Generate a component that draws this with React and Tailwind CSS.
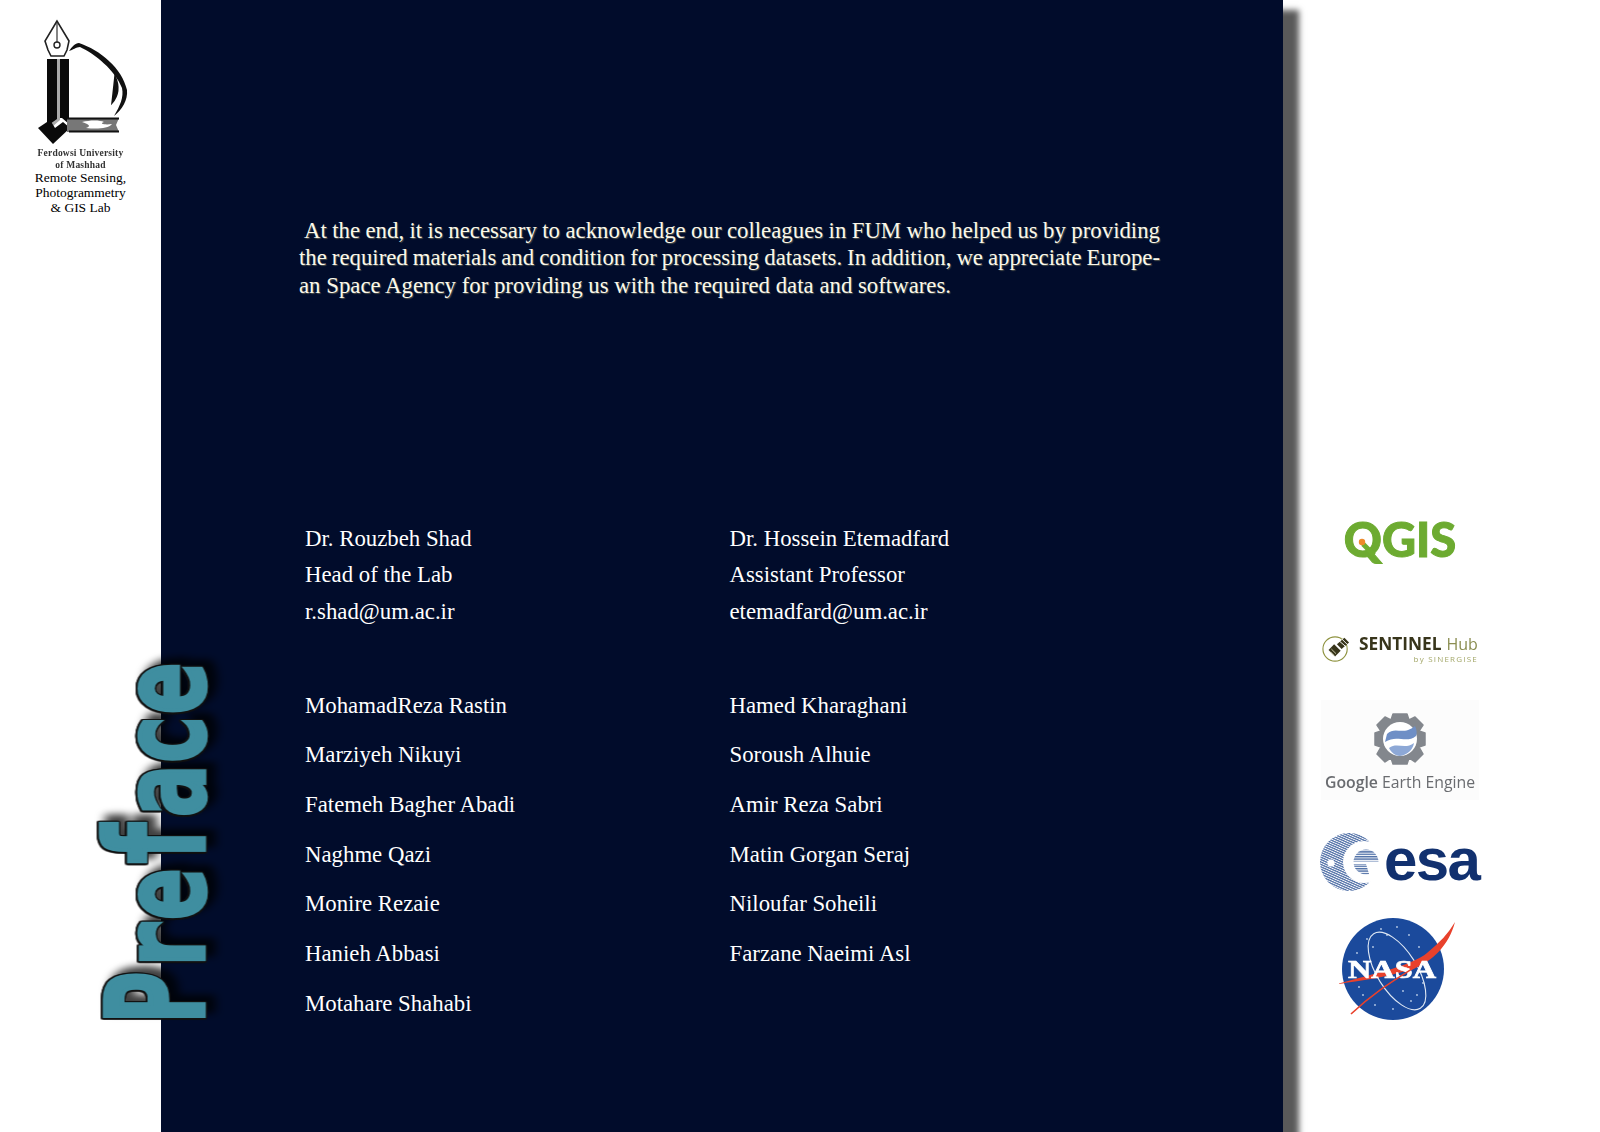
const serif = "font-['Liberation_Serif',serif]";

const intro = [
  "At the end, it is necessary to acknowledge our colleagues in FUM who helped us by providing",
  "the required materials and condition for processing datasets. In addition, we appreciate Europe-",
];
const heads = [
  ["Dr. Rouzbeh Shad", "Head of the Lab", "r.shad@um.ac.ir"],
  ["Dr. Hossein Etemadfard", "Assistant Professor", "etemadfard@um.ac.ir"],
];
const names = [
  ["MohamadReza Rastin", "Marziyeh Nikuyi", "Fatemeh Bagher Abadi", "Naghme Qazi", "Monire Rezaie", "Hanieh Abbasi", "Motahare Shahabi"],
  ["Hamed Kharaghani", "Soroush Alhuie", "Amir Reza Sabri", "Matin Gorgan Seraj", "Niloufar Soheili", "Farzane Naeimi Asl"],
];

function FumLogo() {
  return (
    <svg viewBox="28 15 105 130" className="h-[130px] w-[105px] blur-[0.4px]">
      <path d="M57 21 L45 41 L48 50 L51 56 L64 56 L67 50 L69 41 Z" fill="#fff" stroke="#222" strokeWidth="1.6" />
      <path d="M57 22 V42" stroke="#333" strokeWidth="1.2" />
      <circle cx="57" cy="45" r="3" fill="#fff" stroke="#222" strokeWidth="1.4" />
      <path d="M47 59 H57 V120 L50 127 L47 122 Z" fill="#0a0a0a" />
      <path d="M60 59 H69 V124 L62 118 L60 118 Z" fill="#0a0a0a" />
      <path d="M57 59 H60 V120 L52 127 L50 124 L57 119 Z" fill="#aaa" />
      <path d="M38 128 L50 120 L55 128 L63 122 L70 128 L53 144 Z" fill="#0a0a0a" />
      <path d="M67 118 H119 L116 125 L119 132 H67 Z" fill="#777" />
      <path d="M67 117.5 H119 V119.5 H67 Z M69 130.5 H119 V132.5 H69 Z" fill="#111" />
      <path d="M82 122 C90 120 100 120 104 122 C98 124 106 125 112 124 C108 129 96 129 86 128 C92 126 88 124 82 122 Z" fill="#fff" />
      <path d="M69 51 C72 47 75 43 79 43 C100 50 122 68 127 90 C128 100 122 110 114 116 C120 106 124 97 122 88 C115 70 95 54 80 47 C76 47 73 50 69 51 Z" fill="#111" />
      <path d="M115 76 C119 85 119 95 112 103 C113 95 114 85 115 76 Z" fill="#111" stroke="#111" strokeWidth="1.5" />
    </svg>
  );
}

function SentinelIcon() {
  return (
    <svg viewBox="0 0 30 30" className="h-[28px] w-[28px] shrink-0">
      <circle cx="14" cy="15" r="13" fill="none" stroke="#8f9340" strokeWidth="1.2" />
      <path d="M7 16 L13 10 L20 17 L14 23 Z" fill="#38351b" />
      <path d="M16 10 L24 3 L29 8 L21 15 Z" fill="#38351b" />
      <path d="M18 6 L25 12 M21 4 L27 10" stroke="#fff" strokeWidth="1" />
      <path d="M10 15 L15 20 M9 18 L13 22" stroke="#c9c9a8" strokeWidth="1" />
    </svg>
  );
}

function GeeIcon() {
  return (
    <svg viewBox="0 0 54 54" className="h-[54px] w-[54px]">
      <path d="M20 2 H34 L36 8 L42 5 L50 13 L46 19 L52 21 V33 L46 35 L50 42 L42 50 L36 46 L34 52 H20 L18 46 L12 50 L4 42 L8 35 L2 33 V21 L8 19 L4 13 L12 5 L18 8 Z" fill="#83878d" stroke="#83878d" strokeWidth="1.5" strokeLinejoin="round" />
      <circle cx="27" cy="27" r="17" fill="#fff" />
      <path d="M14 22 C22 14 30 24 42 14 C44 18 44 22 43 24 C33 32 24 22 12 30 Z" fill="#6f8fc6" />
      <path d="M16 36 C24 30 32 38 41 31 C40 38 34 43 27 44 C22 44 18 40 16 36 Z" fill="#8da8d6" />
    </svg>
  );
}

function EsaMark() {
  return (
    <svg viewBox="0 0 60 60" className="h-[60px] w-[60px] shrink-0">
      <defs>
        <pattern id="esa-lines" width="2.2" height="2.2" patternUnits="userSpaceOnUse" patternTransform="rotate(24)">
          <rect width="2.2" height="1.3" fill="#4f6fa6" />
        </pattern>
        <pattern id="esa-flat" width="2.4" height="2.4" patternUnits="userSpaceOnUse">
          <rect width="2.4" height="1.4" fill="#4f6fa6" />
        </pattern>
      </defs>
      <circle cx="29" cy="30" r="29" fill="url(#esa-lines)" />
      <circle cx="44" cy="30" r="21" fill="#fff" />
      <circle cx="11" cy="31" r="3.6" fill="#fff" />
      <circle cx="46" cy="30" r="12.5" fill="url(#esa-flat)" />
      <rect x="33" y="29.5" width="27" height="2.6" fill="#fff" />
      <path d="M46 32 H60 V45 H50 Z" fill="#fff" />
    </svg>
  );
}

function NasaLogo() {
  const stars = [[30, 22], [44, 12], [60, 10], [72, 18], [20, 36], [82, 30], [26, 78], [38, 88], [56, 92], [74, 84], [86, 66], [66, 74], [50, 18], [36, 30], [80, 78], [22, 70]];
  return (
    <svg viewBox="0 0 126 104" className="h-[104px] w-[126px]">
      <circle cx="56" cy="52" r="51" fill="#1b4a9c" />
      {stars.map(([x, y]) => (
        <circle key={`${x}-${y}`} cx={x} cy={y} r="0.9" fill="#b9cde8" />
      ))}
      <ellipse cx="60" cy="54" rx="20" ry="44" transform="rotate(-32 60 54)" fill="none" stroke="#dfe8f4" strokeWidth="1.1" />
      <path d="M0 67 C40 56 76 48 90 36 C104 24 110 18 118 5 C112 28 96 44 76 52 C50 60 24 64 0 67 Z" fill="#e8412c" />
      <text x="55" y="61" textAnchor="middle" fill="#fff" stroke="#fff" strokeWidth="0.7" fontFamily="'Liberation Serif', serif" fontWeight="700" fontSize="26" textLength="88" lengthAdjust="spacingAndGlyphs">NASA</text>
      <path d="M14 97 C36 76 56 64 78 50" fill="none" stroke="#e8412c" strokeWidth="1.6" />
    </svg>
  );
}

function QMark() {
  return (
    <svg viewBox="0 0 24 24" className="absolute top-[16px] left-[9px] h-[24px] w-[24px]">
      <path d="M10 12 L21 23" stroke="#6fae31" strokeWidth="5" />
      <circle cx="9" cy="10" r="3.2" fill="#ee8a2c" />
    </svg>
  );
}

export default function App() {
  return (
    <div className={`relative flex h-[1132px] w-[1600px] overflow-hidden bg-white ${serif}`}>
      <aside className="flex w-[161px] shrink-0 flex-col items-center pt-[15px] text-black">
        <FumLogo />
        <p className="mt-[3px] text-center text-[9.5px] leading-[11.5px] font-bold tracking-[0.2px] text-[#333] blur-[0.3px]">
          Ferdowsi University<br />of Mashhad
        </p>
        <p className="-mt-[1px] text-center text-[13.5px] leading-[15px]">
          Remote Sensing,<br />Photogrammetry<br />&amp; GIS Lab
        </p>
      </aside>

      <main className="relative z-10 w-[1122px] shrink-0 bg-[#010c2b] pt-[217px] pl-[138px] text-white shadow-[16px_10px_6px_rgba(0,0,0,0.65)]">
        <div className="w-[861px] text-[22.8px] leading-[27.3px] text-[#fbf8ea] [text-shadow:1px_1px_1px_rgba(110,110,90,0.7)]">
          <p className="pl-[5px] [word-spacing:-0.8px] [text-align-last:justify]">{intro[0]}</p>
          <p className="[word-spacing:-0.8px] [text-align-last:justify]">{intro[1]}</p>
          <p>an Space Agency for providing us with the required data and softwares.</p>
        </div>

        <div className="mt-[222px] ml-[6px] grid w-[849px] grid-cols-2 text-[22.8px]">
          {heads.map((lines) => (
            <div key={lines[0]} className="leading-[36.6px]">
              {lines.map((t) => <p key={t}>{t}</p>)}
            </div>
          ))}
        </div>
        <div className="mt-[50px] ml-[6px] grid w-[849px] grid-cols-2 text-[22.8px]">
          {names.map((col) => (
            <div key={col[0]} className="leading-[49.7px]">
              {col.map((t) => <p key={t}>{t}</p>)}
            </div>
          ))}
        </div>
      </main>

      <aside className="flex flex-1 flex-col items-center pt-[516px] pr-[83px] font-['Open_Sans',sans-serif]">
        <div className="relative h-[46px] font-['Lato',sans-serif] text-[47px] leading-[46px] font-black text-[#6dab31] blur-[0.4px] [-webkit-text-stroke:1px_#6dab31]">
          QGIS
          <QMark />
        </div>

        <div className="mt-[72px] flex w-[156px] items-center gap-[9px] blur-[0.3px]">
          <SentinelIcon />
          <div className="flex flex-col items-end">
            <div className="flex items-baseline gap-[5px] text-[17.3px] leading-[19px] whitespace-nowrap">
              <span className="font-bold text-[#38351b]">SENTINEL</span>
              <span className="text-[16px] text-[#8b8e52]">Hub</span>
            </div>
            <div className="text-[8px] leading-[9px] tracking-[1.2px] text-[#a4a86a]">by SINERGISE</div>
          </div>
        </div>

        <div className="mt-[37px] flex h-[100px] w-[158px] flex-col items-center bg-[#fcfcfc] pt-[12px] blur-[0.3px]">
          <GeeIcon />
          <div className="mt-[6px] whitespace-nowrap text-[15.8px] leading-[20px] text-[#6a6c70]">
            <span className="font-semibold">Google</span> Earth Engine
          </div>
        </div>

        <div className="mt-[31px] ml-[2px] flex h-[62px] w-[162px] items-center blur-[0.3px]">
          <EsaMark />
          <span className="-mt-[4px] ml-[4px] font-['Liberation_Sans',sans-serif] text-[60px] leading-[60px] font-bold tracking-[-1.6px] text-[#12316f]">esa</span>
        </div>

        <div className="mt-[24px] -ml-[1px] blur-[0.3px]">
          <NasaLogo />
        </div>
      </aside>

      <div className="pointer-events-none absolute top-[1023px] left-[221px] z-20 origin-top-left [transform:rotate(-90deg)_scale(0.7,0.93)_translateY(-100%)] font-['DejaVu_Sans_Mono',monospace] text-[122px] leading-[122px] font-bold whitespace-nowrap text-[#3f8ea0] [-webkit-text-stroke:5px_#3f8ea0] [filter:drop-shadow(1.5px_0_0_#111)_drop-shadow(-1.5px_0_0_#111)_drop-shadow(0_1.5px_0_#111)_drop-shadow(0_-1.5px_0_#111)_drop-shadow(9px_9px_5px_rgba(0,0,0,0.75))]">
        <span className="inline-block origin-[50%_84.6%] scale-y-[1.18]">P</span>re<span className="inline-block origin-[50%_84.6%] scale-y-[1.18]">f</span>ace
      </div>
    </div>
  );
}
